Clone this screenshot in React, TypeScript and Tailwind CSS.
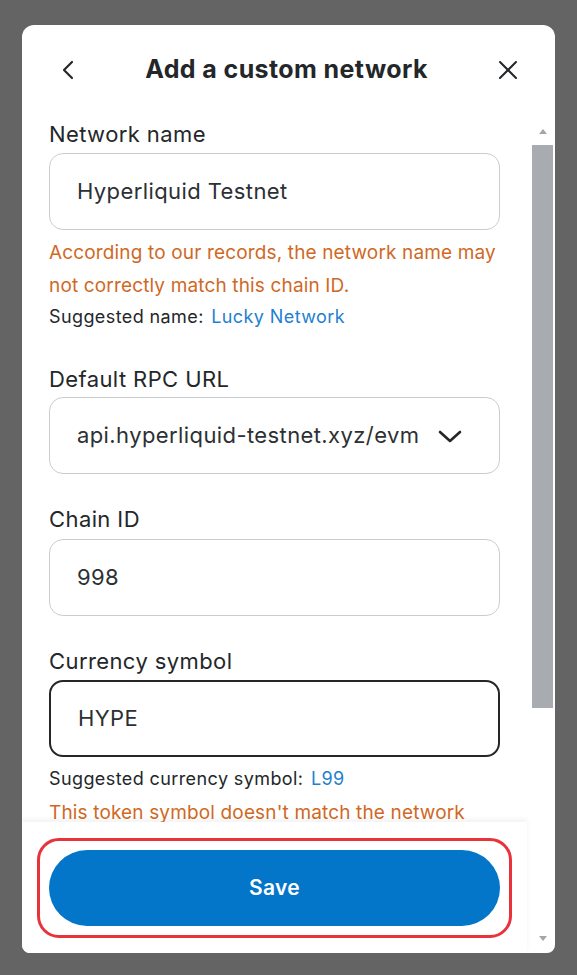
import React from "react";

const font = { fontFamily: "Inter, 'Noto Sans', sans-serif" };

function Label({ children, className = "" }: { children: React.ReactNode; className?: string }) {
  return <div className={`text-[22px] leading-[28px] tracking-[0.4px] text-[#24272a] ${className}`}>{children}</div>;
}

function Field({
  value,
  focused = false,
  className = "",
  trailing,
}: {
  value: string;
  focused?: boolean;
  className?: string;
  trailing?: React.ReactNode;
}) {
  return (
    <div
      className={`flex items-center h-[77px] rounded-[14px] pl-[27px] pr-[36px] ${
        focused ? "border-2 border-[#24272a]" : "border border-[#c9ccd0]"
      } ${className}`}
    >
      <span className="flex-1 text-[22px] tracking-[0.4px] text-[#2d3033] whitespace-nowrap overflow-hidden">{value}</span>
      {trailing}
    </div>
  );
}

export default function App() {
  return (
    <div className="w-[577px] h-[975px] bg-[#646464] pt-[25px] pl-[22px]" style={font}>
      <div className="w-[533px] h-[928px] bg-white rounded-t-[12px] rounded-b-[8px] flex flex-col overflow-hidden">
        {/* Header */}
        <div className="h-[90px] shrink-0 flex items-center justify-between pl-[38px] pr-[36px]">
          <svg width="16" height="22" viewBox="0 0 16 22" fill="none" stroke="#24272a" strokeWidth="2.2" strokeLinecap="round" strokeLinejoin="round">
            <polyline points="12,3 4,11 12,19" />
          </svg>
          <h1 className="text-[25px] font-bold text-[#24272a] tracking-[0.4px]">Add a custom network</h1>
          <svg width="22" height="22" viewBox="0 0 22 22" fill="none" stroke="#24272a" strokeWidth="2" strokeLinecap="round">
            <line x1="3" y1="3" x2="19" y2="19" />
            <line x1="19" y1="3" x2="3" y2="19" />
          </svg>
        </div>

        <div className="flex flex-1 min-h-0">
          {/* Form column */}
          <div className="w-[505px] flex flex-col">
            <div className="flex-1 min-h-0 overflow-hidden px-[27px]">
              <Label className="mt-[5px]">Network name</Label>
              <Field value="Hyperliquid Testnet" className="mt-[5px]" />
              <p className="mt-[6px] text-[19px] leading-[33px] tracking-[0.15px] text-[#d0691f]">
                According to our records, the network name may not correctly match this chain ID.
              </p>
              <p className="text-[18px] leading-[30px] tracking-[0.4px] text-[#24272a]">
                Suggested name: <span className="text-[#1f80d0] ml-[2px]">Lucky Network</span>
              </p>

              <Label className="mt-[33px]">Default RPC URL</Label>
              <Field
                value="api.hyperliquid-testnet.xyz/evm"
                className="mt-[4px] pr-[36px]"
                trailing={
                  <svg width="26" height="18" viewBox="0 0 26 18" fill="none" stroke="#24272a" strokeWidth="2.6" strokeLinecap="round" strokeLinejoin="round" className="ml-[8px] shrink-0">
                    <polyline points="3,5 13,14 23,5" />
                  </svg>
                }
              />

              <Label className="mt-[31px]">Chain ID</Label>
              <Field value="998" className="mt-[6px] h-[76px]" />

              <Label className="mt-[31px]">Currency symbol</Label>
              <Field value="HYPE" focused className="mt-[5px] h-[76px]" />
              <p className="mt-[7px] text-[18px] leading-[30px] tracking-[0.4px] text-[#24272a]">
                Suggested currency symbol: <span className="text-[#1f80d0] ml-[2px]">L99</span>
              </p>
              <p className="mt-[2px] text-[19px] leading-[33px] tracking-[0.15px] text-[#d0691f]">
                This token symbol doesn't match the network name or chain ID entered.
              </p>
            </div>

            {/* Footer */}
            <div className="h-[131px] shrink-0 bg-white px-[27px] pt-[28px] shadow-[0_-3px_5px_rgba(0,0,0,0.05)] relative">
              <div className="relative">
                <button className="w-full h-[76px] rounded-full bg-[#0376c9] text-white text-[21px] font-semibold tracking-[0.3px]">
                  Save
                </button>
                <div className="absolute -inset-[12px] border-[3px] border-[#e8333a] rounded-[22px] pointer-events-none" />
              </div>
            </div>
          </div>

          {/* Scrollbar */}
          <div className="w-[28px] flex flex-col items-center pl-[3px] pt-[14px] pb-[12px]">
            <div className="w-0 h-0 border-l-[4px] border-r-[4px] border-b-[5px] border-l-transparent border-r-transparent border-b-[#a3a6aa]" />
            <div className="mt-[11px] w-[21px] h-[563px] bg-[#a8abb0]" />
            <div className="flex-1" />
            <div className="w-0 h-0 border-l-[4px] border-r-[4px] border-t-[5px] border-l-transparent border-r-transparent border-t-[#a3a6aa]" />
          </div>
        </div>
      </div>
    </div>
  );
}
